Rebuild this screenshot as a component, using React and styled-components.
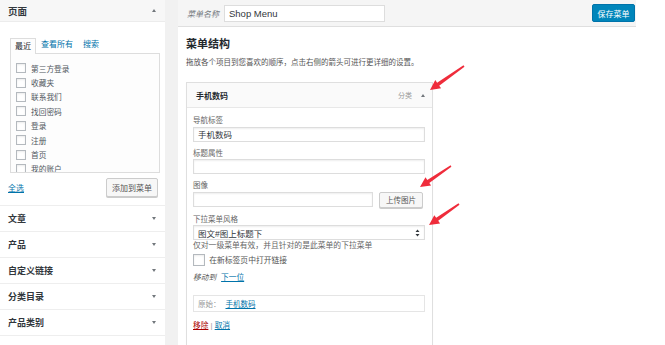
import React from 'react'
import styled, { createGlobalStyle } from 'styled-components'

const GlobalStyle = createGlobalStyle`
  html, body {
    margin: 0;
    padding: 0;
    background: #fff;
  }
  body {
    font-family: "Liberation Sans", "Noto Sans CJK SC", sans-serif;
    color: #23282d;
  }
  * {
    box-sizing: border-box;
  }
`

const Page = styled.div`
  position: relative;
  width: 665px;
  height: 345px;
  overflow: hidden;
  display: grid;
  grid-template-columns: 165px 1fr;
  column-gap: 13px;
  background: #f1f1f1;
`

const Sidebar = styled.div`
  background: #fff;
  display: flex;
  flex-direction: column;
`

const SideHeader = styled.div`
  height: 22px;
  display: flex;
  align-items: center;
  justify-content: space-between;
  padding: 0 9px 0 8px;
  background: #f7f7f7;
  border-bottom: 1px solid #ececec;
  font-size: 9.5px;
  font-weight: 700;
  color: #32373c;
`

const Caret = styled.span`
  width: 0;
  height: 0;
  border-left: 2.5px solid transparent;
  border-right: 2.5px solid transparent;
  ${(p) => (p.$up ? 'border-bottom: 3.5px solid #72777c;' : 'border-top: 3.5px solid #72777c;')}
`

const TabsWrap = styled.div`
  padding: 15px 5px 0 10px;
`

const TabRow = styled.div`
  display: flex;
  align-items: flex-end;
  position: relative;
  z-index: 1;
`

const Tab = styled.span`
  height: 16px;
  line-height: 15px;
  padding: 0 5px;
  font-size: 8px;
  color: ${(p) => (p.$active ? '#23282d' : '#0073aa')};
  ${(p) =>
    p.$active &&
    `
    border: 1px solid #ddd;
    border-bottom: 0;
    background: #fdfdfd;
    margin-bottom: -1px;
    padding: 0 4px;
  `}
`

const TabPanel = styled.div`
  width: 150px;
  height: 120px;
  border: 1px solid #ddd;
  background: #fdfdfd;
  padding: 7px 0 0 5px;
  overflow: hidden;
`

const CheckItem = styled.div`
  display: flex;
  align-items: center;
  gap: 5px;
  height: 14.4px;
  font-size: 7.7px;
  color: #50575e;
`

const Box = styled.span`
  flex: none;
  width: ${(p) => p.$size || 10}px;
  height: ${(p) => p.$size || 10}px;
  border: 1px solid #b4b9be;
  background: #fff;
  box-shadow: inset 0 1px 2px rgba(0, 0, 0, 0.08);
`

const SideFooter = styled.div`
  display: flex;
  justify-content: space-between;
  align-items: center;
  padding: 5px 7px 8px 8px;
  border-bottom: 1px solid #eee;
`

const Link = styled.span`
  color: ${(p) => (p.$danger ? '#a00' : '#0073aa')};
  text-decoration: underline;
`

const SmallLink = styled(Link)`
  font-size: 8px;
`

const Button = styled.span`
  display: inline-flex;
  align-items: center;
  justify-content: center;
  height: ${(p) => p.$h || 19}px;
  padding: 0 ${(p) => p.$px || 6}px;
  border: 1px solid #ccc;
  border-radius: 2px;
  background: #f7f7f7;
  box-shadow: 0 1px 0 #ccc;
  font-size: ${(p) => p.$fs || 8}px;
  color: #555;
  white-space: nowrap;
`

const AccordionItem = styled.div`
  height: 26px;
  display: flex;
  align-items: center;
  justify-content: space-between;
  padding: 0 9px 0 8px;
  border-bottom: 1px solid #eee;
  font-size: 9px;
  font-weight: 700;
  color: #32373c;
`

const Main = styled.div`
  background: #fff;
  padding-right: 29px;
`

const MenuBar = styled.div`
  height: 27px;
  display: flex;
  align-items: center;
  padding: 0 1px 0 9px;
  background: #f5f5f5;
  border-bottom: 1px solid #dfdfdf;
`

const MenuNameLabel = styled.span`
  font-size: 8px;
  font-style: italic;
  color: #72777c;
`

const NameInput = styled.div`
  margin-left: 5px;
  width: 161px;
  height: 17px;
  display: flex;
  align-items: center;
  padding: 0 4px;
  background: #fff;
  border: 1px solid #ddd;
  font-size: 9.5px;
  color: #32373c;
`

const PrimaryButton = styled.span`
  margin-left: auto;
  width: 43px;
  height: 18px;
  display: flex;
  align-items: center;
  justify-content: center;
  background: #0085ba;
  border: 1px solid #0073aa;
  border-radius: 2px;
  color: #fff;
  font-size: 8px;
`

const Content = styled.div`
  padding-left: 8px;
`

const Heading = styled.div`
  margin-top: 10px;
  font-size: 11px;
  line-height: 14px;
  font-weight: 700;
  color: #23282d;
`

const Description = styled.div`
  margin-top: 7px;
  font-size: 7.5px;
  line-height: 10px;
  color: #555;
  white-space: nowrap;
`

const Card = styled.div`
  margin-top: 14px;
  width: 247px;
  border: 1px solid #dfdfdf;
  box-shadow: 0 1px 1px rgba(0, 0, 0, 0.04);
  background: #fff;
`

const CardHeader = styled.div`
  height: 25px;
  display: flex;
  align-items: center;
  padding: 0 7px 0 9px;
  background: #fafafa;
  border-bottom: 1px solid #e8e8e8;
  font-size: 8px;
  font-weight: 700;
`

const CardType = styled.span`
  margin-left: auto;
  margin-right: 9px;
  font-size: 7px;
  font-weight: 400;
  color: #999;
`

const CardBody = styled.div`
  padding: 7px 7px 10px 6px;
`

const Field = styled.div`
  margin-bottom: 6px;
`

const FieldLabel = styled.div`
  font-size: 7.5px;
  line-height: 11px;
  color: #666;
  margin-bottom: 0.5px;
`

const Input = styled.div`
  height: 15px;
  width: ${(p) => p.$w || '100%'};
  display: flex;
  align-items: center;
  justify-content: space-between;
  padding: 0 4px;
  border: 1px solid #ddd;
  background: #fff;
  box-shadow: inset 0 1px 2px rgba(0, 0, 0, 0.07);
  font-size: 8.5px;
  color: #32373c;
`

const InlineRow = styled.div`
  display: flex;
  align-items: center;
  gap: 6px;
`

const HelpText = styled.div`
  font-size: 7.8px;
  line-height: 11px;
  color: #666;
`

const CheckRow = styled.div`
  margin-top: 2.5px;
  display: flex;
  align-items: center;
  gap: 2px;
  font-size: 7.8px;
  color: #555;
`

const MoveRow = styled.div`
  margin-top: 7px;
  font-size: 7.7px;
  line-height: 10px;
  color: #555;
  em {
    margin-right: 5px;
  }
`

const OriginalBox = styled.div`
  margin-top: 12px;
  height: 17px;
  display: flex;
  align-items: center;
  gap: 5px;
  padding: 0 4px;
  border: 1px solid #e5e5e5;
  font-size: 7.5px;
  color: #999;
`

const Actions = styled.div`
  margin-top: 9px;
  font-size: 7.7px;
  line-height: 10px;
  color: #999;
`

const Overlay = styled.svg`
  position: absolute;
  left: 0;
  top: 0;
  pointer-events: none;
`

const SelectArrows = () => (
  <svg width="5" height="8" viewBox="0 0 5 8">
    <path d="M2.5 0.5 L4.5 3 L0.5 3 Z M2.5 7.5 L4.5 5 L0.5 5 Z" fill="#32373c" />
  </svg>
)

const Arrow = ({ x1, y1, x2, y2 }) => {
  const dx = x2 - x1
  const dy = y2 - y1
  const len = Math.hypot(dx, dy)
  const ux = dx / len
  const uy = dy / len
  const px = -uy
  const py = ux
  const bx = x2 - ux * 10
  const by = y2 - uy * 10
  const pt = (x, y, w) => `${(x + px * w).toFixed(1)},${(y + py * w).toFixed(1)}`
  const points = [
    pt(x1, y1, 0.8),
    pt(bx, by, 1.8),
    pt(bx, by, 5),
    `${x2},${y2}`,
    pt(bx, by, -5),
    pt(bx, by, -1.8),
    pt(x1, y1, -0.8),
  ].join(' ')
  return <polygon points={points} fill="#ef2c3b" />
}

const pages = ['第三方登录', '收藏夹', '联系我们', '找回密码', '登录', '注册', '首页', '我的账户']
const sections = ['文章', '产品', '自定义链接', '分类目录', '产品类别']

const App = () => (
  <>
    <GlobalStyle />
    <Page>
      <Sidebar>
        <SideHeader>
          页面
          <Caret $up />
        </SideHeader>
        <TabsWrap>
          <TabRow>
            <Tab $active>最近</Tab>
            <Tab>查看所有</Tab>
            <Tab>搜索</Tab>
          </TabRow>
          <TabPanel>
            {pages.map((p) => (
              <CheckItem key={p}>
                <Box />
                {p}
              </CheckItem>
            ))}
          </TabPanel>
        </TabsWrap>
        <SideFooter>
          <SmallLink>全选</SmallLink>
          <Button $px={5}>添加到菜单</Button>
        </SideFooter>
        {sections.map((s) => (
          <AccordionItem key={s}>
            {s}
            <Caret />
          </AccordionItem>
        ))}
      </Sidebar>

      <Main>
        <MenuBar>
          <MenuNameLabel>菜单名称</MenuNameLabel>
          <NameInput>Shop Menu</NameInput>
          <PrimaryButton>保存菜单</PrimaryButton>
        </MenuBar>
        <Content>
          <Heading>菜单结构</Heading>
          <Description>拖放各个项目到您喜欢的顺序，点击右侧的箭头可进行更详细的设置。</Description>
          <Card>
            <CardHeader>
              手机数码
              <CardType>分类</CardType>
              <Caret $up />
            </CardHeader>
            <CardBody>
              <Field>
                <FieldLabel>导航标签</FieldLabel>
                <Input>手机数码</Input>
              </Field>
              <Field>
                <FieldLabel>标题属性</FieldLabel>
                <Input />
              </Field>
              <Field>
                <FieldLabel>图像</FieldLabel>
                <InlineRow>
                  <Input $w="180px" />
                  <Button $h={16} $fs={7.5}>上传图片</Button>
                </InlineRow>
              </Field>
              <Field>
                <FieldLabel>下拉菜单风格</FieldLabel>
                <Input>
                  图文#图上标题下
                  <SelectArrows />
                </Input>
                <HelpText>仅对一级菜单有效，并且针对的是此菜单的下拉菜单</HelpText>
                <CheckRow>
                  <Box $size={12} />
                  &nbsp;在新标签页中打开链接
                </CheckRow>
                <MoveRow>
                  <em>移动到</em>
                  <Link>下一位</Link>
                </MoveRow>
                <OriginalBox>
                  原始：
                  <Link>手机数码</Link>
                </OriginalBox>
                <Actions>
                  <Link $danger>移除</Link> | <Link>取消</Link>
                </Actions>
              </Field>
            </CardBody>
          </Card>
        </Content>
      </Main>

      <Overlay width="665" height="345" viewBox="0 0 665 345">
        <Arrow x1={464} y1={66} x2={430} y2={90} />
        <Arrow x1={451} y1={166} x2={420} y2={187} />
        <Arrow x1={459} y1={204} x2={429} y2={225} />
      </Overlay>
    </Page>
  </>
)

export default App
